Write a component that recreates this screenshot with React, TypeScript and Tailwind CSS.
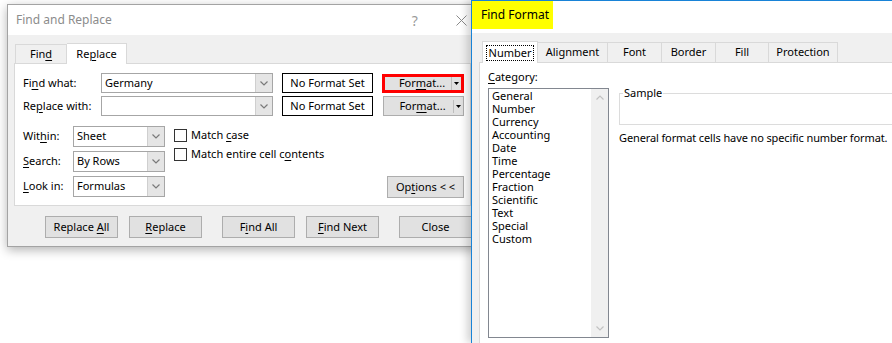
import React from 'react'

const U = ({ children }: { children: React.ReactNode }) => (
  <span className="underline underline-offset-[2px] decoration-[1px]">{children}</span>
)

function Chevron({ up = false }: { up?: boolean }) {
  return (
    <svg width="8" height="5" viewBox="0 0 8 5">
      <path d={up ? 'M0.5 4.5 L4 1 L7.5 4.5' : 'M0.5 0.5 L4 4 L7.5 0.5'} fill="none" stroke="currentColor" strokeWidth="1.2" />
    </svg>
  )
}

function Combo({ value, className }: { value: string; className: string }) {
  return (
    <div className={`flex border border-[#a6a6a6] bg-white ${className}`}>
      <div className="flex-1 flex items-center pl-[3px]">{value}</div>
      <div className="w-[17px] bg-[#e5e5e5] border-l border-[#cfcfcf] flex items-center justify-center text-[#7a7a7a]">
        <Chevron />
      </div>
    </div>
  )
}

function Btn({ children, className }: { children: React.ReactNode; className: string }) {
  return (
    <div className={`flex items-center justify-center bg-[#e1e1e1] border border-[#adadad] ${className}`}>
      <span>{children}</span>
    </div>
  )
}

function FormatBtn() {
  return (
    <>
      <div className="flex-1 flex items-center justify-center pl-[8px]">
        <span>
          For<U>m</U>at...
        </span>
      </div>
      <div className="w-px h-[13px] bg-[#bdbdbd]" />
      <div className="w-[9px] flex items-center justify-center">
        <svg width="5" height="3" viewBox="0 0 5 3">
          <path d="M0 0 H5 L2.5 3 Z" fill="#000" />
        </svg>
      </div>
    </>
  )
}

function Checkbox({ label }: { label: React.ReactNode }) {
  return (
    <div className="flex items-center h-[19px]">
      <div className="w-[13px] h-[13px] border border-[#333] bg-white" />
      <span className="ml-[4px]">{label}</span>
    </div>
  )
}

function FindReplace() {
  return (
    <div className="absolute left-[7px] top-[4px] w-[472px] h-[243px] border border-[#a3a3a3] bg-[#f0f0f0] shadow-[0_3px_10px_rgba(0,0,0,0.3)] flex flex-col">
      {/* title bar */}
      <div className="h-[30px] bg-white flex items-center pl-[8px] text-[#8c8c8c] text-[12px]">
        <span>Find and Replace</span>
        <span className="ml-[300px] text-[14px] text-[#9a9a9a]">?</span>
        <svg width="11" height="11" viewBox="0 0 11 11" className="ml-[38px]">
          <path d="M0.5 0.5 L10.5 10.5 M10.5 0.5 L0.5 10.5" stroke="#8a8a8a" strokeWidth="1" />
        </svg>
      </div>

      <div className="flex-1 pl-[6px] pt-[7px]">
        {/* tabs */}
        <div className="flex items-end h-[21px] pl-[1px]">
          <div className="w-[52px] h-[19px] border border-b-0 border-[#d9d9d9] bg-[#f0f0f0] flex items-center justify-center">
            <span>
              Fin<U>d</U>
            </span>
          </div>
          <div className="w-[60px] h-[21px] border border-b-0 border-l-0 border-[#d9d9d9] bg-white flex items-center justify-center relative top-[1px]">
            <span>
              Re<U>p</U>lace
            </span>
          </div>
        </div>

        {/* tab page */}
        <div className="w-[457px] h-[143px] border border-[#d9d9d9] bg-white pl-[8px] pt-[9px]">
          <div className="flex items-center h-[20px]">
            <div className="w-[78px]">Fi<U>n</U>d what:</div>
            <Combo value="Germany" className="w-[172px] h-[20px]" />
            <div className="ml-[9px] w-[91px] h-[20px] border border-black flex items-center justify-center">No Format Set</div>
            <div className="ml-[9px] w-[82px] h-[19px] border-[3px] border-[#ff0000] bg-[#e1e1e1] flex items-center">
              <FormatBtn />
            </div>
          </div>
          <div className="flex items-center h-[20px] mt-[3px]">
            <div className="w-[78px]">Re<U>p</U>lace with:</div>
            <Combo value="" className="w-[172px] h-[20px]" />
            <div className="ml-[9px] w-[91px] h-[20px] border border-black flex items-center justify-center">No Format Set</div>
            <div className="ml-[10px] w-[81px] h-[20px] border border-[#adadad] bg-[#e1e1e1] flex items-center">
              <FormatBtn />
            </div>
          </div>

          <div className="flex mt-[10px] pr-[6px]">
            <div className="flex flex-col gap-[4px]">
              <div className="flex items-center h-[21px]">
                <div className="w-[50px]">Wit<U>h</U>in:</div>
                <Combo value="Sheet" className="w-[92px] h-[21px]" />
              </div>
              <div className="flex items-center h-[21px]">
                <div className="w-[50px]"><U>S</U>earch:</div>
                <Combo value="By Rows" className="w-[92px] h-[21px]" />
              </div>
              <div className="flex items-center h-[21px]">
                <div className="w-[50px]"><U>L</U>ook in:</div>
                <Combo value="Formulas" className="w-[92px] h-[21px]" />
              </div>
            </div>
            <div className="ml-[9px] flex flex-col">
              <Checkbox label={<>Match <U>c</U>ase</>} />
              <Checkbox label={<>Match entire cell c<U>o</U>ntents</>} />
            </div>
            <Btn className="ml-auto self-end mb-[-1px] w-[77px] h-[22px]">
              Op<U>t</U>ions &lt; &lt;
            </Btn>
          </div>
        </div>

        {/* bottom buttons */}
        <div className="flex mt-[10px] pl-[31px]">
          <Btn className="w-[73px] h-[22px]">
            Replace <U>A</U>ll
          </Btn>
          <Btn className="ml-[11px] w-[73px] h-[22px]">
            <U>R</U>eplace
          </Btn>
          <Btn className="ml-[20px] w-[73px] h-[22px]">
            F<U>i</U>nd All
          </Btn>
          <Btn className="ml-[11px] w-[73px] h-[22px]">
            <U>F</U>ind Next
          </Btn>
          <Btn className="ml-[20px] w-[73px] h-[22px]">Close</Btn>
        </div>
      </div>
    </div>
  )
}

const categories = [
  'General',
  'Number',
  'Currency',
  'Accounting',
  'Date',
  'Time',
  'Percentage',
  'Fraction',
  'Scientific',
  'Text',
  'Special',
  'Custom',
]

const tabs = [
  { name: 'Alignment', w: 'w-[70px]' },
  { name: 'Font', w: 'w-[54px]' },
  { name: 'Border', w: 'w-[54px]' },
  { name: 'Fill', w: 'w-[53px]' },
  { name: 'Protection', w: 'w-[69px]' },
]

function FindFormat() {
  return (
    <div className="absolute left-[471px] top-0 w-[421px] h-[343px] border-l border-t border-[#1883d7] bg-[#f0f0f0] shadow-[-4px_0_8px_rgba(0,0,0,0.18)] z-10 flex flex-col">
      {/* title bar */}
      <div className="h-[32px] bg-white">
        <div className="w-[81px] h-[28px] bg-[#ffff00] flex items-center pl-[9px] text-black text-[12px]">
          Find Format
        </div>
      </div>

      <div className="flex-1 pl-[7px] pt-[7px] flex flex-col">
        {/* tabs */}
        <div className="flex items-end h-[22px] pl-[3px]">
          <div className="w-[56px] h-[22px] border border-b-0 border-[#d9d9d9] bg-white flex items-center justify-center relative top-[1px]">
            <span className="border border-dotted border-black px-[2px] leading-[14px]">Number</span>
          </div>
          {tabs.map((t) => (
            <div
              key={t.name}
              className={`${t.w} h-[20px] border border-b-0 border-l-0 border-[#d9d9d9] bg-[#f0f0f0] flex items-center justify-center`}
            >
              {t.name}
            </div>
          ))}
        </div>

        {/* tab page */}
        <div className="flex-1 border-l border-t border-[#d9d9d9] bg-white pl-[8px] pt-[7px] flex">
          <div className="flex flex-col">
            <div className="h-[14px] flex items-center">
              <span>
                <U>C</U>ategory:
              </span>
            </div>
            <div className="mt-[4px] w-[121px] h-[250px] border border-[#828790] flex">
              <div className="flex-1 pl-[3px]">
                {categories.map((c) => (
                  <div key={c} className="h-[13px] leading-[13px]">{c}</div>
                ))}
              </div>
              <div className="w-[17px] bg-[#f0f0f0] flex flex-col items-center justify-between py-[6px] text-[#c2c2c2]">
                <Chevron up />
                <Chevron />
              </div>
            </div>
          </div>

          <div className="ml-[10px] mt-[17px] flex-1 flex flex-col min-w-0">
            <fieldset className="h-[38px] border border-[#dcdcdc] border-r-0 pl-[3px]">
              <legend className="px-[1px] leading-[12px]">Sample</legend>
            </fieldset>
            <div className="mt-[5px] whitespace-nowrap tracking-[-0.12px]">
              General format cells have no specific number format.
            </div>
          </div>
        </div>
      </div>
    </div>
  )
}

export default function App() {
  return (
    <div className="relative w-[892px] h-[343px] bg-white overflow-hidden text-[11px] text-black font-['Noto_Sans',sans-serif]">
      <FindReplace />
      <FindFormat />
    </div>
  )
}
